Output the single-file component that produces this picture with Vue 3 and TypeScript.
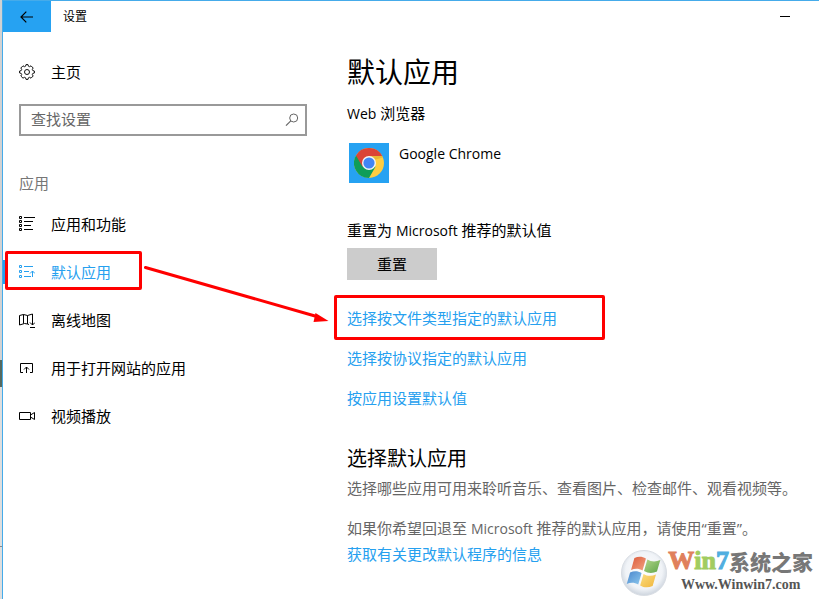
<script setup lang="ts">
import { ref } from 'vue'

type NavItem = { id: string; label: string }

const navItems: NavItem[] = [
  { id: 'features', label: '应用和功能' },
  { id: 'defaults', label: '默认应用' },
  { id: 'maps', label: '离线地图' },
  { id: 'websites', label: '用于打开网站的应用' },
  { id: 'video', label: '视频播放' },
]
const active = ref('defaults')
const query = ref('')
const links: string[] = ['选择按文件类型指定的默认应用', '选择按协议指定的默认应用', '按应用设置默认值']
</script>

<template>
  <div class="desktop">
    <div class="window">
      <header class="titlebar">
        <button class="back" type="button" aria-label="返回">
          <svg width="14" height="12" viewBox="0 0 14 12" fill="none" stroke="#000" stroke-width="1.2">
            <path d="M13 6H1M6.3 .7L1 6l5.3 5.3" />
          </svg>
        </button>
        <span class="title">设置</span>
        <button class="minimize" type="button" aria-label="最小化"><span class="dash"></span></button>
      </header>

      <div class="body">
        <aside class="sidebar">
          <a class="home" href="#home">
            <svg class="icon" width="16" height="16" viewBox="0 0 16 16" fill="none" stroke="#111" stroke-width="1">
              <path d="M6.6 2.2L7 .6h2l.4 1.6 1.2.5L12 1.8 14.2 4l-.9 1.4.5 1.2 1.6.4v2l-1.6.4-.5 1.2.9 1.4-2.2 2.2-1.4-.9-1.2.5L9 15.4H7l-.4-1.6-1.2-.5-1.4.9L1.8 12l.9-1.4-.5-1.2L.6 9V7l1.6-.4.5-1.2L1.8 4 4 1.8l1.4.9z" />
              <circle cx="8" cy="8" r="2.5" />
            </svg>
            <span>主页</span>
          </a>
          <div class="search">
            <input v-model="query" type="text" placeholder="查找设置" aria-label="查找设置" />
            <svg width="14" height="14" viewBox="0 0 14 14" fill="none" stroke="#666" stroke-width="1">
              <circle cx="8.7" cy="5" r="4" />
              <path d="M5.8 7.9L1 12.7" stroke-width="1.2" />
            </svg>
          </div>
          <h3 class="group">应用</h3>
          <nav>
            <a
              v-for="item in navItems"
              :key="item.id"
              class="nav-item"
              :class="{ active: item.id === active }"
              :href="'#' + item.id"
              @click="active = item.id"
            >
              <svg class="icon" width="16" height="16" viewBox="0 0 16 16" fill="none" stroke="currentColor" stroke-width="1">
                <template v-if="item.id === 'features'">
                  <path d="M.5.5h2v2h-2zM.5 4.5h2v2h-2zM.5 8.5h2v2h-2zM.5 12.5h2v2h-2zM5 1.5h11M5 5.5h9M5 9.5h7M5 13.5h9" />
                </template>
                <template v-else-if="item.id === 'defaults'">
                  <path d="M.5 1.5h2v2h-2zM.5 6.5h2v2h-2zM.5 11.5h2v2h-2zM5 2.5h9M5 7.5h5M5 12.5h7M13.5 13V7M11 9.5L13.5 7 16 9.5" />
                </template>
                <template v-else-if="item.id === 'maps'">
                  <path d="M10 12.5L8.5 12l-3-.5-5 1.500V3.500l4-1 4 1 5-1.500v11M4.500 2.500v9M8.500 3.500v8.500M11 10.500l2.500 2.500 2.500-2.500M11 15.500h5" />
                </template>
                <template v-else-if="item.id === 'websites'">
                  <path d="M4 12.5H1.5v-9h12v9H11M7.5 13V7M5 9.5L7.500 7 10 9.500" />
                </template>
                <template v-else>
                  <path d="M.5 4.5h11v7H.5zM11.5 7l4-2.5v7l-4-2.5" />
                </template>
              </svg>
              <span>{{ item.label }}</span>
            </a>
          </nav>
        </aside>

        <main class="content">
          <h1>默认应用</h1>
          <p class="label"><span class="latin">Web</span> 浏览器</p>
          <button class="app" type="button">
            <span class="tile">
              <svg width="30" height="30" viewBox="0 0 30 30">
                <circle cx="15" cy="15" r="15" fill="#ffcd40" />
                <path d="M15 15L2 7.5A15 15 0 0 0 15 30l6.5-11.3z" fill="#0f9d58" />
                <path d="M2 7.5A15 15 0 0 1 28.2 8H15L8.5 18.7z" fill="#db4437" />
                <path d="M15 8h13.2l.6 1.4L20 12z" fill="#c99b22" opacity=".4" />
                <circle cx="15" cy="15" r="7" fill="#f4f4f4" />
                <circle cx="15" cy="15" r="5.6" fill="#4285f4" />
              </svg>
            </span>
            <span class="app-name latin">Google Chrome</span>
          </button>
          <p class="reset-label">重置为 <span class="latin">Microsoft</span> 推荐的默认值</p>
          <button class="reset" type="button">重置</button>
          <ul class="links">
            <li v-for="link in links" :key="link"><a href="#defaults">{{ link }}</a></li>
          </ul>
          <h2>选择默认应用</h2>
          <p class="note">选择哪些应用可用来聆听音乐、查看图片、检查邮件、观看视频等。</p>
          <p class="note second">如果你希望回退至 <span class="latin">Microsoft</span> 推荐的默认应用，请使用“重置”。</p>
          <a class="more" href="#help">获取有关更改默认程序的信息</a>
        </main>
      </div>
    </div>

    <div class="mark mark-nav"></div>
    <div class="mark mark-link"></div>
    <svg class="arrow" width="190" height="62" viewBox="0 0 190 62">
      <path d="M2.5 3.5L172 52" stroke="#f00" stroke-width="3" stroke-linecap="round" />
      <path d="M172.5 49L185.5 57L170.5 58z" fill="#f00" />
    </svg>

    <div class="watermark">
      <svg width="48" height="48" viewBox="0 0 50 50">
        <defs>
          <radialGradient id="orb" cx="50%" cy="45%" r="54%">
            <stop offset="0" stop-color="#fff" />
            <stop offset=".75" stop-color="#f0f3f7" />
            <stop offset="1" stop-color="#cfd6df" />
          </radialGradient>
          <linearGradient id="red" x2="1" y2="1"><stop stop-color="#dc5a3c" /><stop offset="1" stop-color="#f2a582" /></linearGradient>
          <linearGradient id="green" x2="1" y2="1"><stop stop-color="#b4d68a" /><stop offset="1" stop-color="#5ea548" /></linearGradient>
          <linearGradient id="blue" x2="1" y2="1"><stop stop-color="#4a86cc" /><stop offset="1" stop-color="#8cc8ee" /></linearGradient>
          <linearGradient id="gold" x2="1" y2="1"><stop stop-color="#fbde80" /><stop offset="1" stop-color="#f0b53c" /></linearGradient>
        </defs>
        <circle cx="25" cy="25" r="23.5" fill="url(#orb)" stroke="#d8dde3" />
        <path d="M15 9.5c4-2 8-2 12 .5L23.5 22.5c-4-2.5-8-2.5-12-.5z" fill="url(#red)" />
        <path d="M28.5 11c4 2.5 9 2.5 13.5.5l-3.5 12c-4.5 2-9 2-13.5-.5z" fill="url(#green)" />
        <path d="M10.5 24.5c4-2 8-2 12 .5L19 37c-4-2.5-8-2.5-12-.5z" fill="url(#blue)" />
        <path d="M24.5 26c4 2.5 8.5 2.5 13 .5L34 38.5c-4.5 2-9 2-13-.5z" fill="url(#gold)" />
      </svg>
      <div class="brand">
        <div class="brand-name"><b class="w">W</b><b class="in">in</b><b class="seven">7</b><span>系统之家</span></div>
        <div class="brand-url">Www.Winwin7.com</div>
      </div>
    </div>
  </div>
</template>

<style>
body {
  margin: 0;
  background: #fff;
}
</style>

<style scoped>
* {
  box-sizing: border-box;
}
.desktop {
  position: relative;
  min-height: 100vh;
  padding-left: 2px;
  overflow: hidden;
  display: flex;
  background: linear-gradient(#d2d2d2 0 360px, #55695f 360px 387px, #dedede 387px 546px, #888 546px 547px, #dedede 547px);
  font-family: 'Open Sans', 'Noto Sans CJK SC', sans-serif;
  font-size: 15px;
  line-height: 20px;
  color: #000;
}
.window {
  flex: 1;
  min-width: 0;
  background: #fff;
  border-top: 1px solid #45abea;
  border-left: 1px solid #45abea;
}
h1, h2, h3, p, ul {
  margin: 0;
  padding: 0;
  font-weight: 400;
}
a {
  color: #26a0ef;
  text-decoration: none;
}
button, input {
  font: inherit;
  color: inherit;
  border: 0;
  padding: 0;
  background: none;
}
.latin {
  font-size: 14px;
}
.titlebar {
  display: flex;
  align-items: center;
  height: 31px;
}
.back {
  display: grid;
  place-items: center;
  width: 48px;
  height: 31px;
  background: #26a2f2;
}
.title {
  flex: 1;
  margin-left: 12px;
  font-size: 12px;
}
.minimize {
  display: grid;
  place-items: center;
  width: 68px;
  height: 31px;
}
.dash {
  width: 10px;
  height: 1px;
  background: #000;
}
.body {
  display: grid;
  grid-template-columns: 344px minmax(0, 1fr);
}
.home {
  display: flex;
  align-items: center;
  gap: 16px;
  margin-top: 16px;
  height: 48px;
  padding-left: 16px;
  color: #000;
}
.search {
  display: flex;
  align-items: center;
  margin: 8px 40px 0 16px;
  height: 32px;
  padding: 0 6px 0 10px;
  border: 2px solid #999;
}
.search input {
  flex: 1;
  min-width: 0;
  height: 24px;
  padding-bottom: 2px;
  outline: 0;
}
.search input::placeholder {
  color: #666;
  opacity: 1;
}
.group {
  padding: 37px 0 7px 16px;
  font-size: 15px;
  color: #767676;
}
.nav-item {
  position: relative;
  display: flex;
  align-items: center;
  gap: 16px;
  height: 48px;
  padding-left: 16px;
  color: #000;
}
.nav-item.active {
  color: #26a0ef;
}
.nav-item.active::before {
  content: '';
  position: absolute;
  left: 0;
  width: 4px;
  height: 24px;
  background: #26a0ef;
}
.icon {
  flex: none;
}
.content {
  white-space: nowrap;
}
h1 {
  margin-top: 20px;
  font-size: 28px;
  line-height: 40px;
}
.label {
  margin-top: 11px;
}
.app {
  display: flex;
  gap: 10px;
  margin: 19px 0 0 2px;
}
.app-name {
  line-height: 22px;
}
.tile {
  display: grid;
  place-items: center;
  width: 40px;
  height: 40px;
  background: #26a2f2;
}
.reset-label {
  margin-top: 37px;
}
.reset {
  display: block;
  width: 90px;
  height: 32px;
  margin-top: 7px;
  background: #ccc;
}
.links {
  margin-top: 18px;
  list-style: none;
}
.links li {
  height: 40px;
  line-height: 40px;
}
h2 {
  margin-top: 27px;
  font-size: 20px;
  line-height: 28px;
}
.note {
  margin-top: 5px;
  color: #666;
}
.second {
  margin-top: 20px;
}
.more {
  display: block;
  margin-top: 5px;
}
.mark {
  position: absolute;
  border: 3px solid #f00;
  border-radius: 2px;
  pointer-events: none;
}
.mark-nav {
  left: 5px;
  top: 251px;
  width: 137px;
  height: 39px;
}
.mark-link {
  left: 334px;
  top: 295px;
  width: 271px;
  height: 45px;
}
.arrow {
  position: absolute;
  left: 143px;
  top: 264px;
  pointer-events: none;
}
.watermark {
  position: absolute;
  right: 6px;
  bottom: 2px;
  display: flex;
  align-items: center;
  pointer-events: none;
}
.brand {
  padding-bottom: 4px;
  white-space: nowrap;
}
.brand-name {
  display: flex;
  align-items: center;
  height: 22px;
  margin-bottom: 6px;
  font: 900 21px/22px 'Noto Sans CJK SC', sans-serif;
  color: #777;
}
.brand-name b {
  font-family: 'Liberation Serif', serif;
  font-size: 26px;
  -webkit-text-stroke: 1px currentColor;
}
.brand-name .w {
  color: #e0805c;
}
.brand-name .in {
  color: #a2cc60;
}
.brand-name .seven {
  color: #50aee0;
}
.brand-url {
  text-align: center;
  font: 700 14px/14px 'Liberation Serif', serif;
  color: #555;
}
</style>
